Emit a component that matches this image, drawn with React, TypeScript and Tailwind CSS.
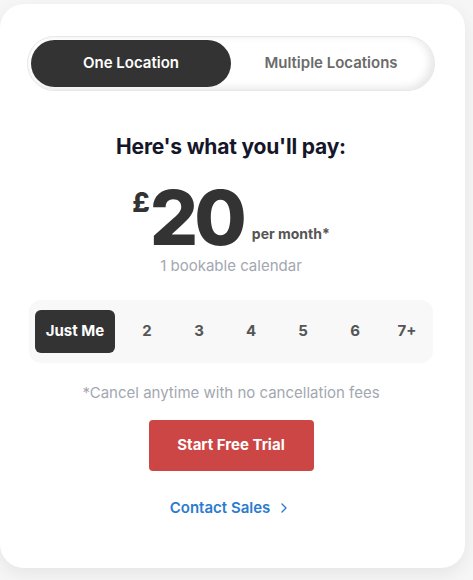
import React, { useState } from 'react';
import { ChevronRight } from 'lucide-react';

const SEATS = ['2', '3', '4', '5', '6', '7+'];

export default function App() {
  const [mode, setMode] = useState<'one' | 'multi'>('one');
  const [seat, setSeat] = useState('Just Me');

  return (
    <div className="h-[580px] w-[473px] overflow-hidden bg-[#f6f6f6] pt-1" style={{ fontFamily: 'Inter, "Liberation Sans", sans-serif' }}>
      <div className="flex h-[564px] w-[465px] flex-col items-center rounded-[24px] bg-white pr-[3px] pt-8 shadow-[0_6px_18px_rgba(0,0,0,0.07)]">
        {/* location toggle */}
        <div className="flex h-[55px] w-[408px] items-center rounded-full border border-[#e6e6e6] bg-white p-[3px] shadow-[inset_-4px_-2px_8px_rgba(0,0,0,0.10)]">
          <button
            onClick={() => setMode('one')}
            className={`h-full w-[200px] rounded-full text-[15px] font-semibold ${mode === 'one' ? 'bg-[#333333] text-white' : 'text-[#6b6b6b]'}`}
          >
            One Location
          </button>
          <button
            onClick={() => setMode('multi')}
            className={`h-full flex-1 rounded-full text-[15px] font-semibold ${mode === 'multi' ? 'bg-[#333333] text-white' : 'text-[#6b6b6b]'}`}
          >
            Multiple Locations
          </button>
        </div>

        {/* price */}
        <h2 className="mt-[42px] text-[21px] font-bold leading-7 tracking-[-0.2px] text-[#16162a]">Here's what you'll pay:</h2>
        <div className="mt-[18px] flex items-start">
          <span className="mt-[10px] text-[27px] font-extrabold leading-none text-[#333333]">£</span>
          <span className="text-[76px] font-extrabold leading-none tracking-[-4px] text-[#333333]">20</span>
          <span className="ml-[9px] mt-[44px] text-[14px] font-bold text-[#555555]">per month*</span>
        </div>
        <p className="text-[15px] text-[#a3a7b0]">1 bookable calendar</p>

        {/* seats */}
        <div className="mt-[22px] flex h-[63px] w-[404px] items-center rounded-[12px] bg-[#f8f8f8] pl-[6px]">
          <button
            onClick={() => setSeat('Just Me')}
            className={`h-[43px] w-[80px] shrink-0 rounded-[6px] text-[15px] font-bold ${seat === 'Just Me' ? 'bg-[#333333] text-white' : 'text-[#555555]'}`}
          >
            Just Me
          </button>
          <div className="ml-[6px] flex">
            {SEATS.map((s) => (
              <button
                key={s}
                onClick={() => setSeat(s)}
                className={`h-[43px] w-[52px] shrink-0 rounded-[6px] text-[15px] font-bold ${seat === s ? 'bg-[#333333] text-white' : 'text-[#555555]'}`}
              >
                {s}
              </button>
            ))}
          </div>
        </div>

        <p className="mt-[19px] text-[15px] text-[#a3a7b0]">*Cancel anytime with no cancellation fees</p>

        <button className="mt-[16px] h-[51px] w-[165px] rounded-[4px] bg-[#cc4645] text-[15px] font-bold text-white">
          Start Free Trial
        </button>

        <a href="#" className="mt-[26px] flex items-center gap-[6px] text-[15px] font-semibold text-[#2b7bcf]">
          Contact Sales
          <ChevronRight size={16} strokeWidth={2} />
        </a>
      </div>
    </div>
  );
}
